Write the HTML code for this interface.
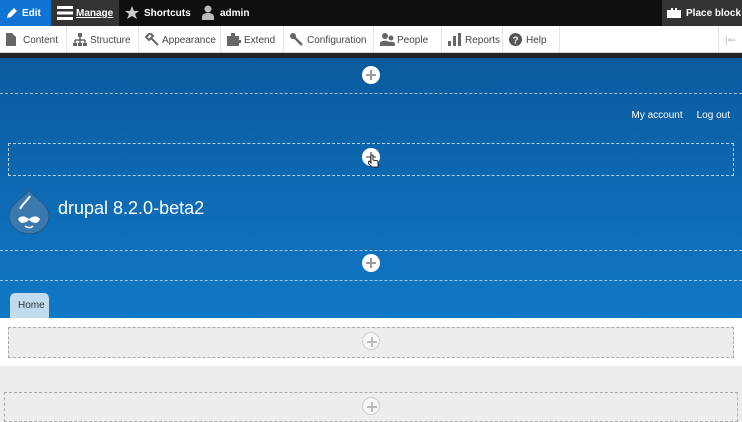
<!DOCTYPE html>
<html><head><style>
*{box-sizing:border-box;margin:0;padding:0}
body{width:742px;height:415px;overflow:hidden;font-family:"Liberation Sans",sans-serif;background:#eceeeb;position:relative}
.a{position:absolute}
.top{left:0;top:0;width:742px;height:26px;background:#0f0f0f;color:#fff;font-size:10px;font-weight:bold}
.top div{position:absolute;top:0;height:26px;line-height:28px}
.tray{left:0;top:26px;width:742px;height:27px;background:#fff;border-bottom:1px solid #ccc;font-size:10px;color:#444}
.tray div{position:absolute;top:0;height:26px;line-height:29px;border-right:1px solid #e5e5e5;padding-left:23px}
.tray svg{position:absolute;left:6px;top:7px}
.blue{left:0;top:58px;width:742px;height:260px;background:linear-gradient(#0a5a9e,#1178c6)}
.dash{position:absolute;border-top:1px dashed rgba(255,255,255,.6)}
.box{position:absolute;border:1px dashed rgba(255,255,255,.7)}
.plus{position:absolute;width:18px;height:18px;border-radius:50%;background:#fff}
.plus:before{content:"";position:absolute;left:4px;top:8px;width:10px;height:2px;background:#999}
.plus:after{content:"";position:absolute;left:8px;top:4px;width:2px;height:10px;background:#999}
.gbox{position:absolute;border:1px dashed #aaa;background:#eceeeb}
.gp{background:#f7f7f7;border:1px solid #ccc}
.gp:before,.gp:after{background:#bbb}
</style></head><body>
<div class="a top">
 <div style="left:0;width:51px;background:#0f74d3;padding-left:22px">Edit</div>
 <svg class="a" style="left:6px;top:7px" width="12" height="12"><path d="M1 11l1-4 6-6 3 3-6 6z" fill="#fff"/></svg>
 <div style="left:51px;width:68px;background:#333;padding-left:25px;text-decoration:underline">Manage</div>
 <svg class="a" style="left:57px;top:6px" width="16" height="14"><rect y="0" width="16" height="3" fill="#fff"/><rect y="5.5" width="16" height="3" fill="#fff"/><rect y="11" width="16" height="3" fill="#fff"/></svg>
 <div style="left:144px">Shortcuts</div>
 <svg class="a" style="left:125px;top:6px" width="14" height="14"><path d="M7 0l2 5h5l-4 3 2 5-5-3-5 3 2-5-4-3h5z" fill="#ccc"/></svg>
 <div style="left:220px">admin</div>
 <svg class="a" style="left:202px;top:5px" width="12" height="15"><circle cx="6" cy="4" r="3.5" fill="#bbb"/><path d="M0 15v-3c0-3 3-4 6-4s6 1 6 4v3z" fill="#bbb"/></svg>
 <div style="left:662px;width:80px;background:#333;padding-left:24px">Place block</div>
 <svg class="a" style="left:667px;top:8px" width="14" height="10"><path d="M0 2h4v-2h2v2h2v-2h2v2h4v8h-14z" fill="#fff"/></svg>
</div>
<div class="a tray">
 <div style="left:0;width:67px"><svg width="10" height="13"><path d="M0 0h6l4 4v9h-10z" fill="#666"/></svg>Content</div>
 <div style="left:67px;width:72px"><svg width="14" height="13"><rect x="5" y="0" width="4" height="4" fill="#666"/><path d="M7 4v3M2 7h10M2 7v3M7 7v3M12 7v3" stroke="#666" stroke-width="1.5"/><rect x="0" y="10" width="4" height="3" fill="#666"/><rect x="5" y="10" width="4" height="3" fill="#666"/><rect x="10" y="10" width="4" height="3" fill="#666"/></svg>Structure</div>
 <div style="left:139px;width:82px"><svg width="14" height="13"><path d="M1 4l4-4 3 3-4 4zM6 5l7 7" stroke="#666" stroke-width="2" fill="none"/></svg>Appearance</div>
 <div style="left:221px;width:63px"><svg width="14" height="13"><path d="M0 3h4v-3h4v3h4v4h2v3h-2v3h-12z" fill="#666"/></svg>Extend</div>
 <div style="left:284px;width:90px"><svg width="14" height="13"><path d="M2 2l4 4 6 6" stroke="#666" stroke-width="2.5"/><circle cx="3" cy="3" r="3" fill="#666"/></svg>Configuration</div>
 <div style="left:374px;width:68px"><svg width="15" height="13"><circle cx="5" cy="3" r="3" fill="#666"/><path d="M0 13v-3c0-3 10-3 10 0v3z" fill="#666"/><circle cx="11" cy="5" r="2.5" fill="#666"/><path d="M8 13v-2c0-3 7-3 7 0v2z" fill="#666"/></svg>People</div>
 <div style="left:442px;width:61px"><svg width="14" height="13"><rect x="0" y="8" width="3" height="5" fill="#666"/><rect x="5" y="3" width="3" height="10" fill="#666"/><rect x="10" y="0" width="3" height="13" fill="#666"/></svg>Reports</div>
 <div style="left:503px;width:57px"><svg width="13" height="13"><circle cx="6.5" cy="6.5" r="6.5" fill="#555"/><text x="6.5" y="10.5" font-size="10" font-weight="bold" fill="#fff" text-anchor="middle" font-family="Liberation Sans">?</text></svg>Help</div>
 <div style="left:718px;width:24px;border-right:0;border-left:1px solid #e5e5e5;color:#bbb;padding-left:6px">|⇐</div>
</div>
<div class="a" style="left:0;top:53px;width:742px;height:5px;background:#232323"></div>
<div class="a blue">
 <div class="dash" style="left:0;top:35px;width:742px"></div>
 <div style="position:absolute;right:12px;top:52px;color:#fff;font-size:10px">My account<span style="margin-left:14px">Log out</span></div>
 <div class="box" style="left:8px;top:85px;width:726px;height:33px"></div>
 <div style="position:absolute;left:9px;top:130px;width:40px;height:46px">
  <svg width="40" height="46"><path d="M20 2c3 6 20 14 20 26a19 17 0 0 1-40 0c0-12 17-20 20-26z" fill="#3a78ad" stroke="#1c5a8f"/><path d="M11 21c3-6 8-9 10-13" stroke="#fff" stroke-width="2" fill="none"/><path d="M9 31c3-4 7-3 11 0 4-3 8-4 11 0-2 5-6 5-11 1-5 4-9 4-11-1z" fill="#fff"/><path d="M16 38c3 2 6 2 8 0" stroke="#fff" stroke-width="1.5" fill="none"/></svg>
 </div>
 <div style="position:absolute;left:58px;top:140px;color:#fff;font-size:18px">drupal 8.2.0-beta2</div>
 <div class="dash" style="left:0;top:192px;width:742px"></div>
 <div class="dash" style="left:0;top:222px;width:742px"></div>
 <div style="position:absolute;left:10px;top:235px;width:39px;height:25px;background:#c2dcef;border-radius:5px 5px 0 0;font-size:10px;color:#333;padding:7px 0 0 8px">Home</div>
 <div class="plus" style="left:362px;top:8px"></div>
 <div class="plus" style="left:362px;top:90px"></div>
 <div class="plus" style="left:362px;top:196px"></div>
 <svg class="a" style="left:368px;top:96px" width="12" height="14"><path d="M3 1v8l-2-2-1 2 4 4h6v-6l-5-1v-5z" fill="#fff" stroke="#000" stroke-width=".8"/></svg>
</div>
<div class="a" style="left:0;top:318px;width:742px;height:48px;background:#fff"></div>
<div class="gbox" style="left:8px;top:327px;width:726px;height:31px"></div>
<div class="plus gp" style="left:362px;top:332px"></div>
<div class="gbox" style="left:4px;top:392px;width:734px;height:30px"></div>
<div class="plus gp" style="left:362px;top:397px"></div>
</body></html>
